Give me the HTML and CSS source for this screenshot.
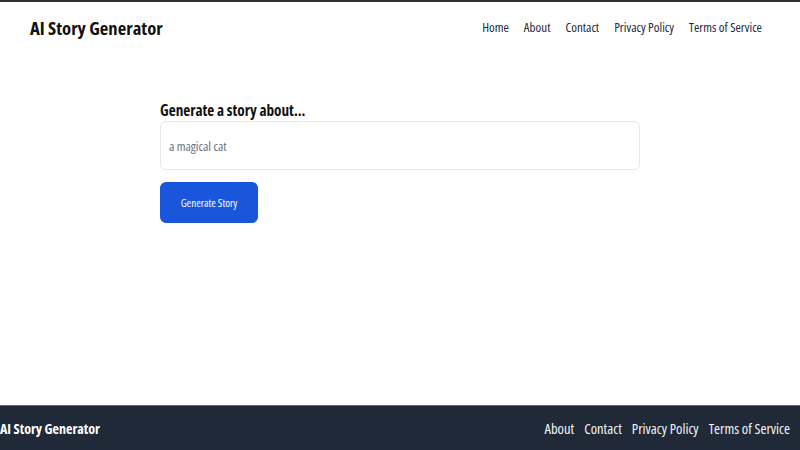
FILE: index.html
```html
<!DOCTYPE html>
<html lang="en">
<head>
<meta charset="utf-8">
<title>AI Story Generator</title>
<link rel="stylesheet" href="styles.css">
</head>
<body>
<div class="page">
  <header class="site-header">
    <div class="brand">AI Story Generator</div>
    <nav class="nav">
      <a href="#">Home</a>
      <a href="#">About</a>
      <a href="#">Contact</a>
      <a href="#">Privacy Policy</a>
      <a href="#">Terms of Service</a>
    </nav>
  </header>
  <main class="main">
    <form class="story-form">
      <label class="label" for="topic">Generate a story about...</label>
      <input class="input" id="topic" type="text" placeholder="a magical cat">
      <button class="btn" type="button">Generate Story</button>
    </form>
  </main>
  <footer class="site-footer">
    <div class="footer-brand">AI Story Generator</div>
    <nav class="footer-nav">
      <a href="#">About</a>
      <a href="#">Contact</a>
      <a href="#">Privacy Policy</a>
      <a href="#">Terms of Service</a>
    </nav>
  </footer>
</div>
</body>
</html>
```
FILE: styles.css
```css
* { box-sizing: border-box; }
html, body { margin: 0; padding: 0; }
body {
  font-family: "Open Sans", "Noto Sans", sans-serif;
  font-stretch: 75%;
  color: #111827;
  background: #fff;
}
.page {
  min-height: 100vh;
  display: flex;
  flex-direction: column;
  border-top: 2px solid #2f2f33;
}
.site-header {
  height: 50px;
  display: flex;
  align-items: center;
  justify-content: space-between;
  padding: 0 38px 0 30px;
}
.brand {
  font-size: 18.6px;
  font-weight: 700;
  color: #111;
}
.nav {
  display: flex;
  gap: 15px;
}
.nav a {
  font-size: 13px;
  color: #1f2937;
  text-decoration: none;
}
.main {
  flex: 1;
  display: flex;
  justify-content: center;
  padding-top: 49px;
}
.story-form {
  width: 480px;
  display: flex;
  flex-direction: column;
  align-items: flex-start;
}
.label {
  font-size: 15.2px;
  font-weight: 700;
  line-height: 19px;
  color: #111;
  margin-bottom: 1px;
}
.input {
  width: 100%;
  height: 49px;
  border: 1px solid #e5e7eb;
  border-radius: 6px;
  padding: 0 8px;
  font-family: inherit;
  font-stretch: 75%;
  font-size: 13px;
  color: #374151;
  outline: none;
}
.input::placeholder { color: #6b7280; }
.btn {
  margin-top: 12px;
  width: 98px;
  height: 41px;
  border: none;
  border-radius: 6px;
  background: #1a56db;
  color: #fff;
  font-family: inherit;
  font-stretch: 75%;
  font-size: 11px;
  cursor: pointer;
}
.site-footer {
  height: 45px;
  background: #1f2937;
  border-top: 1px solid #5b6272;
  display: flex;
  align-items: center;
  justify-content: space-between;
  padding: 0 10px 0 0;
  color: #fff;
}
.footer-brand {
  font-size: 14px;
  font-weight: 700;
}
.footer-nav {
  display: flex;
  gap: 10px;
}
.footer-nav a {
  font-size: 14.5px;
  color: #f3f4f6;
  text-decoration: none;
}
```
